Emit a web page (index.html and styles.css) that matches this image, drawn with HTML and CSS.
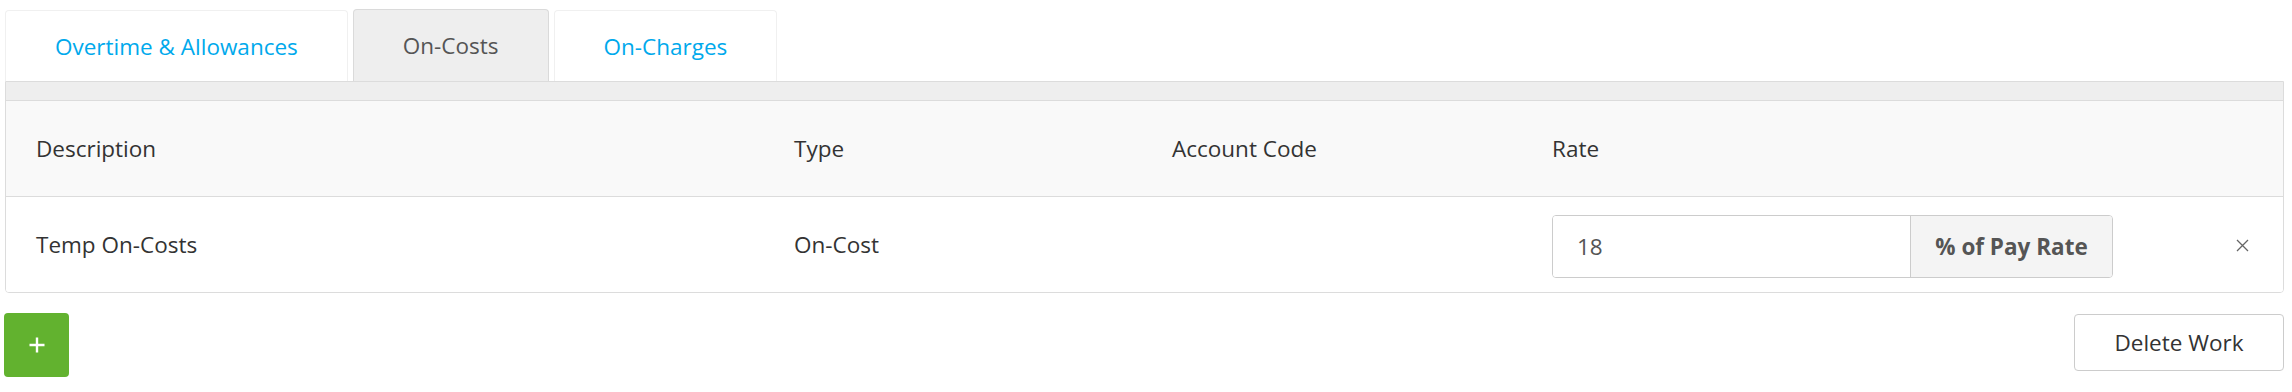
FILE: index.html
```html
<!DOCTYPE html>
<html lang="en">
<head>
<meta charset="utf-8">
<title>On-Costs</title>
<link rel="stylesheet" href="styles.css">
</head>
<body>
<div class="page">
  <nav class="tabs">
    <a class="tab">Overtime &amp; Allowances</a>
    <a class="tab active">On-Costs</a>
    <a class="tab">On-Charges</a>
  </nav>
  <section class="panel">
    <div class="band"></div>
    <div class="row head">
      <div class="cell">Description</div>
      <div class="cell">Type</div>
      <div class="cell">Account Code</div>
      <div class="cell">Rate</div>
      <div class="cell"></div>
    </div>
    <div class="row body">
      <div class="cell">Temp On-Costs</div>
      <div class="cell">On-Cost</div>
      <div class="cell"></div>
      <div class="cell">
        <div class="input-group">
          <input class="rate-input" type="text" value="18">
          <span class="addon">% of Pay Rate</span>
        </div>
      </div>
      <div class="cell remove">
        <svg width="13" height="13" viewBox="0 0 13 13" aria-hidden="true"><path d="M1 1 L12 12 M12 1 L1 12" stroke="#666" stroke-width="1.3" fill="none"/></svg>
      </div>
    </div>
  </section>
  <div class="actions">
    <button class="add" type="button" aria-label="Add">
      <svg width="16" height="16" viewBox="0 0 16 16" aria-hidden="true"><path d="M8 0.5 V15.5 M0.5 8 H15.5" stroke="#fff" stroke-width="2.4" fill="none"/></svg>
    </button>
    <button class="delete" type="button">Delete Work</button>
  </div>
</div>
</body>
</html>
```

FILE: styles.css
```css
html, body {
  margin: 0;
  padding: 0;
  background: #fff;
}
body {
  font-family: "Open Sans", "Liberation Sans", sans-serif;
  font-size: 22.5px;
  color: #333;
}
.page {
  padding: 0 8px 0 5px;
}
.tabs {
  display: flex;
  align-items: flex-start;
  gap: 5px;
  padding-top: 10px;
  height: 71px;
}
.tab {
  box-sizing: border-box;
  height: 71px;
  padding: 0 49px;
  display: flex;
  align-items: center;
  color: #00a9ec;
  background: #fff;
  border: 1px solid #f0f0f0;
  border-bottom: none;
  border-radius: 4px 4px 0 0;
  cursor: pointer;
}
.tab.active {
  margin-top: -1px;
  height: 72px;
  color: #555;
  background: #eeeeee;
  border-color: #dadada;
  padding: 0 49px 0 49px;
}
.panel {
  border: 1px solid #dcdcdc;
  border-radius: 0 0 4px 4px;
  overflow: hidden;
}
.band {
  height: 18px;
  background: #eeeeee;
  border-bottom: 1px solid #dcdcdc;
}
.row {
  display: grid;
  grid-template-columns: 758px 378px 380px 561px 1fr;
  align-items: center;
  padding: 0 30px;
  height: 95px;
}
.row.head {
  background: #f9f9f9;
  border-bottom: 1px solid #dcdcdc;
}
.row.body {
  background: #fff;
}
.cell {
  white-space: nowrap;
}
.remove {
  justify-self: end;
  margin-right: 4px;
  display: flex;
  align-items: center;
  margin-top: 2px;
}
.input-group {
  display: flex;
  box-sizing: border-box;
  height: 63px;
  margin-top: 4px;
  border: 1px solid #cccccc;
  border-radius: 4px;
  overflow: hidden;
}
.rate-input {
  flex: 1;
  min-width: 0;
  border: none;
  outline: none;
  padding: 0 0 0 24px;
  font: inherit;
  color: #555;
  background: #fff;
}
.addon {
  width: 201px;
  flex: none;
  display: flex;
  align-items: center;
  justify-content: center;
  border-left: 1px solid #cccccc;
  background: #f4f4f4;
  color: #555;
  font-weight: 700;
}
.actions {
  display: flex;
  justify-content: space-between;
  align-items: flex-start;
  margin-top: 20px;
}
.add {
  width: 65px;
  height: 64px;
  border: none;
  border-radius: 4px;
  background: #62b22f;
  display: flex;
  align-items: center;
  justify-content: center;
  padding: 0;
  margin-left: -1px;
  cursor: pointer;
}
.delete {
  box-sizing: border-box;
  width: 210px;
  height: 57px;
  margin-top: 1px;
  border: 1px solid #cccccc;
  border-radius: 4px;
  background: #fff;
  font: inherit;
  color: #333;
  padding: 0;
  cursor: pointer;
}
```
